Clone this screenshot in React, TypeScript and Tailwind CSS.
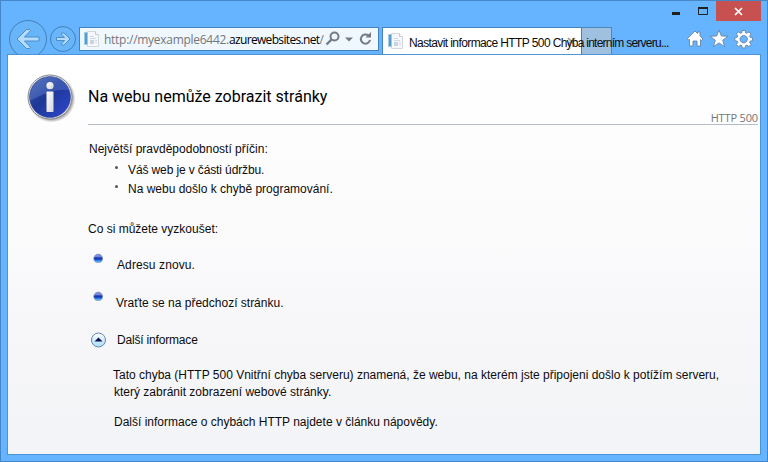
import React from "react";

const body = "font-['Liberation_Sans',Arial,sans-serif] text-[12px] leading-[18px] text-[#0c0c0c] whitespace-nowrap";

function PageIcon() {
  return (
    <svg width="16" height="16" viewBox="0 0 16 16" className="shrink-0">
      <path d="M3.500.5h8l3 3v12h-11z" fill="#f5f7fa" stroke="#d3d8df" />
      <path d="M11.500.5v3h3" fill="#fff" stroke="#c3cad3" />
      <path d="M6 5.500h4M6 7.500h6M11 9.500h2M11 11.500h2" stroke="#d3dae3" />
      <rect x="6" y="9" width="4" height="4" fill="#ccd3dd" />
      <rect x=".5" y="1.500" width="3" height="12" fill="#4f9fcf" stroke="#a3cbe2" strokeWidth=".8" />
    </svg>
  );
}

function Back() {
  return (
    <svg width="38" height="35" viewBox="0 0 38 35" className="shrink-0">
      <circle cx="19" cy="19" r="18.500" fill="#68b5fa" stroke="#437fb9" />
      <path d="M8 19 17.500 9.500h3l1 1.200L15.500 17h14.500v4H15.500l6 6.300-1 1.200h-3z" fill="#b5dcff" stroke="#4b8dcb" />
    </svg>
  );
}

function Forward() {
  return (
    <svg width="26" height="26" viewBox="0 0 26 26" className="shrink-0">
      <circle cx="13" cy="13" r="12.500" fill="#68b5fa" stroke="#437fb9" />
      <path d="M20 13 14 7h-2l-.8 1 3.500 3.500H6.500v3h8.200L11.200 18l.8 1h2z" fill="#b5dcff" stroke="#4b8dcb" />
    </svg>
  );
}

function InfoIcon() {
  return (
    <svg width="50" height="50" viewBox="0 0 50 50" className="shrink-0">
      <defs>
        <linearGradient id="disc" x1="0" y1="0" x2="1" y2="1">
          <stop offset="0" stopColor="#3455a4" />
          <stop offset=".45" stopColor="#1d3797" />
          <stop offset="1" stopColor="#3048d0" />
        </linearGradient>
        <linearGradient id="shine" x1="0" y1="0" x2="1" y2="1">
          <stop offset="0" stopColor="#9cb6ed" stopOpacity=".35" />
          <stop offset="1" stopColor="#7898ee" stopOpacity=".2" />
        </linearGradient>
        <linearGradient id="letter" x1="0" y1="0" x2="1" y2="1">
          <stop offset="0" stopColor="#fff" />
          <stop offset="1" stopColor="#d5d6dc" />
        </linearGradient>
        <radialGradient id="shadow">
          <stop offset=".86" stopColor="#777" stopOpacity=".65" />
          <stop offset="1" stopColor="#777" stopOpacity="0" />
        </radialGradient>
      </defs>
      <circle cx="24.500" cy="24.500" r="24" fill="url(#shadow)" />
      <circle cx="23" cy="23" r="22" fill="#f5f5f5" stroke="#85878d" />
      <circle cx="23" cy="23" r="20.500" fill="url(#disc)" stroke="#31478f" strokeWidth=".6" />
      <path d="M3 27C2 10 14 2.500 24 2.800 33 3 40 9 42.500 16 28 15 16 20 3 27z" fill="url(#shine)" />
      <circle cx="23" cy="11.700" r="3.600" fill="url(#letter)" />
      <rect x="19.500" y="17.500" width="7" height="20.500" rx=".8" fill="url(#letter)" />
    </svg>
  );
}

function Ball() {
  return (
    <svg width="10" height="10" viewBox="0 0 10 10" className="shrink-0">
      <defs>
        <linearGradient id="ball" x1="0" y1="0" x2="0" y2="1">
          <stop offset="0" stopColor="#8794e6" />
          <stop offset=".3" stopColor="#7383dc" />
          <stop offset=".45" stopColor="#0e2aa8" />
          <stop offset=".65" stopColor="#1d5ad8" />
          <stop offset="1" stopColor="#8de3ff" />
        </linearGradient>
      </defs>
      <circle cx="5.200" cy="5.500" r="4.400" fill="url(#ball)" stroke="#7388a8" strokeWidth=".6" />
    </svg>
  );
}

function Collapse() {
  return (
    <svg width="16" height="16" viewBox="0 0 16 16" className="shrink-0">
      <defs>
        <linearGradient id="knob" x1="0" y1="0" x2="0" y2="1">
          <stop offset="0" stopColor="#fff" />
          <stop offset="1" stopColor="#a9dcf8" />
        </linearGradient>
      </defs>
      <circle cx="8.500" cy="8" r="7" fill="url(#knob)" stroke="#6684b0" />
      <path d="M4.500 9.500l4-4 4 4z" fill="#0b1150" />
    </svg>
  );
}

function AddressBar() {
  return (
    <div className="ml-[3px] mt-[27px] flex h-[24px] w-[300px] items-center border border-[#4282bd] bg-[#f0f8ff] pl-[4px]">
      <PageIcon />
      <div className="ml-[4px] w-[221px] whitespace-nowrap pt-px font-['Open_Sans',sans-serif] text-[12px] leading-[18px] text-[#777]">
        <span className="tracking-[-0.28px]">http://myexample6442.</span>
        <span className="tracking-[-0.66px] text-black">azurewebsites.net</span>/
      </div>
      <svg width="54" height="20" viewBox="0 0 54 20" className="shrink-0" fill="none" stroke="#747b83">
        <circle cx="10.500" cy="7.500" r="4" strokeWidth="2" />
        <path d="m7.500 10.500-5 5" strokeWidth="2.400" />
        <path d="M21 8.500h8l-4 4z" fill="#747b83" stroke="none" />
        <path d="M44.500 6.600a4.600 4.600 0 1 0 1.500 4.400" strokeWidth="2" />
        <path d="M41.500 8.500h5.500V3z" fill="#747b83" stroke="none" />
      </svg>
    </div>
  );
}

function Tabs() {
  return (
    <div className="relative ml-[3px] mt-[27px] flex h-[27px] w-[230px]">
      <div className="flex w-[200px] items-center border border-b-0 border-[#4282bd] bg-white pl-[5px]">
        <PageIcon />
        <svg width="9" height="9" viewBox="0 0 9 9" className="ml-[163px] shrink-0">
          <path d="m1 1 7 7m0-7L1 8" stroke="#aaa" strokeWidth="2" />
        </svg>
      </div>
      <div className="w-[30px] border border-b-0 border-l-0 border-[#4a87bd] bg-[#a0c0df]" />
      <span className="absolute left-[27px] top-[7px] whitespace-nowrap font-['Liberation_Sans',Arial,sans-serif] text-[12px] leading-[18px] text-[#0c0c0c]">
        <span className="tracking-[-0.6px]">Nastavit informace HTTP 500 </span>
        <span className="tracking-[-0.75px]">Chyba interním serveru...</span>
      </span>
    </div>
  );
}

function WindowControls() {
  return (
    <div className="flex h-[20px] justify-end">
      <svg width="48" height="20" viewBox="0 0 48 20">
        <path d="M4 12.500h8" stroke="#202020" strokeWidth="3" />
        <path d="M30.500 7h9v6.500h-9z" stroke="#202020" fill="none" />
        <path d="M30 7h10" stroke="#202020" strokeWidth="2" />
      </svg>
      <div className="mr-[6px] flex h-[20px] w-[45px] items-center justify-center bg-[#c75050]">
        <svg width="9" height="9" viewBox="0 0 9 9">
          <path d="m1 1 7 7m0-7L1 8" stroke="#fff" strokeWidth="1.700" />
        </svg>
      </div>
    </div>
  );
}

function Tools() {
  return (
    <svg width="68" height="20" viewBox="0 0 68 20" className="ml-auto mr-[13px] mt-[8px]" fill="#fff" stroke="#5e7c99" strokeWidth=".8">
      <path d="M1.500 9.500 9 2l2.500 2.500V3H14v4l3 3-1.500 1.500L14.500 10.500V17H11v-5H7v5H3.500v-6.500L2.500 11z" />
      <path d="m33 1 2.300 6 6.600.2-5.200 4 1.900 6.400-5.600-3.700-5.600 3.700 1.900-6.400-5.200-4 6.600-.2z" />
      <path fillRule="evenodd" d="m56.200 1.500h3l.4 2.300 1.300.5 2-1.400 2.100 2.100-1.400 2 .6 1.300 2.300.4v3l-2.300.4-.6 1.300 1.400 2-2.100 2.100-2-1.400-1.300.5-.4 2.300h-3l-.4-2.300-1.300-.5-2 1.400-2.100-2.100 1.400-2-.6-1.300-2.300-.4v-3l2.300-.4.6-1.300-1.400-2 2.100-2.100 2 1.400 1.300-.5zM57.700 6.500a3.700 3.700 0 1 0 .01 0z" />
    </svg>
  );
}

export default function App() {
  return (
    <div className="flex h-[462px] w-[768px] flex-col overflow-hidden border border-[#4387c6] bg-[#66b3ff]">
      <header className="flex h-[53px]">
        <div className="flex w-[78px] shrink-0 pl-[8px]">
          <div className="mt-[19px] h-[34px] overflow-hidden"><Back /></div>
          <div className="ml-[3px] mt-[25px]"><Forward /></div>
        </div>
        <div className="-ml-[3px] -mt-px flex"><AddressBar /><Tabs /></div>
        <div className="flex flex-1 flex-col"><WindowControls /><Tools /></div>
      </header>
      <main className="ml-[6px] flex h-[401px] w-[754px] flex-col border border-[#4c94d8] bg-[linear-gradient(#fff_0px,#fcfcfd_140px,#f7f7f9_270px,#f3f4f7_400px)]">
        <div className="flex h-[69px] pl-[19px]">
          <div className="mt-[19px]"><InfoIcon /></div>
          <h1 className="ml-[11px] mt-[30px] whitespace-nowrap font-[Roboto,sans-serif] text-[16px] leading-[24px] text-black">
            Na webu nemůže zobrazit stránky
          </h1>
          <div className="ml-auto mr-[2px] mt-[54px] font-['Open_Sans',sans-serif] text-[11px] leading-[18px] tracking-[-0.15px] text-[#757575]">HTTP 500</div>
        </div>
        <div className="ml-[80px] mr-[2px] h-px bg-[#b5bac8]" />
        <p className={`${body} ml-[81px] mt-[15px]`}>Největší pravděpodobností příčin:</p>
        <ul className="ml-[107px] mt-[3px]">
          <li className="flex h-[19px]">
            <i className="mt-[5px] h-[3px] w-[3px] rounded-full bg-[#555]" />
            <span className={`${body} ml-[10px] tracking-[-0.12px]`}>Váš web je v části údržbu.</span>
          </li>
          <li className="flex h-[19px]">
            <i className="mt-[5px] h-[3px] w-[3px] rounded-full bg-[#555]" />
            <span className={`${body} ml-[10px]`}>Na webu došlo k chybě programování.</span>
          </li>
        </ul>
        <p className={`${body} ml-[80px] mt-[21px]`}>Co si můžete vyzkoušet:</p>
        <div className="ml-[85px] mt-[15px] flex h-[38px]">
          <Ball /><span className={`${body} ml-[14px] mt-[3px] tracking-[0.1px]`}>Adresu znovu.</span>
        </div>
        <div className="ml-[85px] flex h-[38px]">
          <Ball /><span className={`${body} ml-[13px] mt-[3px]`}>Vraťte se na předchozí stránku.</span>
        </div>
        <div className="ml-[82px] mt-[2px] flex h-[18px] items-center">
          <Collapse /><span className={`${body} ml-[11px] tracking-[-0.18px]`}>Další informace</span>
        </div>
        <div className="ml-[105px] mt-[17px]">
          <p className={body}>Tato chyba (HTTP 500 Vnitřní chyba serveru) znamená, že webu, na kterém jste připojeni došlo k potížím serveru,</p>
          <p className={`${body} -mt-px ml-px`}>který zabránit zobrazení webové stránky.</p>
        </div>
        <p className={`${body} ml-[106px] mt-[12px]`}>Další informace o chybách HTTP najdete v článku nápovědy.</p>
      </main>
    </div>
  );
}
